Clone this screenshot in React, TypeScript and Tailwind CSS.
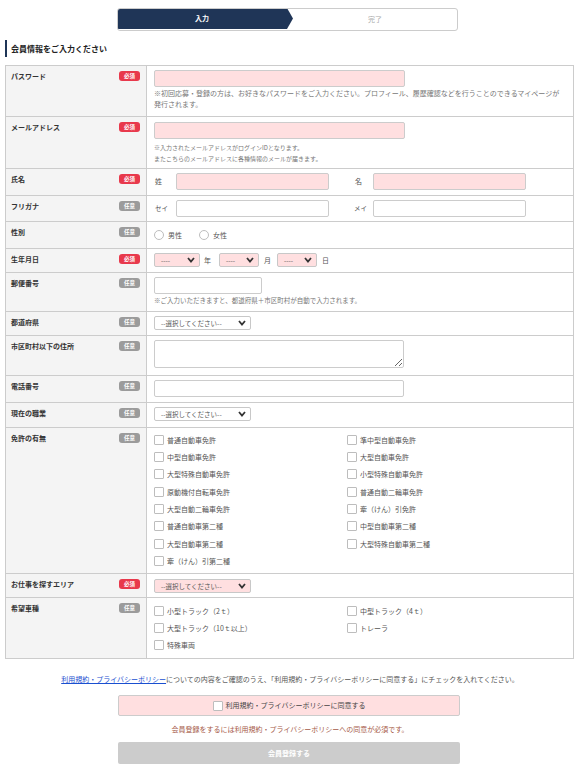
import React from "react";

const FONT = { fontFamily: '"Noto Sans CJK JP", "Noto Sans", sans-serif' };

function Badge({ req }: { req: boolean }) {
  return (
    <span
      className={
        req
          ? "w-[21px] h-[10px] rounded-[3px] bg-[#e8394c] text-white text-[5.5px] leading-[10px] text-center shrink-0 font-bold"
          : "w-[21px] h-[10px] rounded-[3px] bg-[#9b9b9b] text-white text-[5.5px] leading-[10px] text-center shrink-0 font-bold"
      }
    >
      {req ? "必須" : "任意"}
    </span>
  );
}

function Row({
  label,
  req,
  h,
  pt,
  last,
  children,
}: {
  label: string;
  req: boolean;
  h: string;
  pt: string;
  last?: boolean;
  children?: React.ReactNode;
}) {
  return (
    <div className={`flex ${h} ${last ? "" : "border-b border-[#cccccc]"}`}>
      <div className="w-[141px] shrink-0 bg-[#f4f4f4] border-r border-[#cccccc] flex justify-between items-start pl-[5px] pr-[6px] pt-[5px]">
        <span className="text-[7px] leading-[10px] font-bold text-[#333]">{label}</span>
        <Badge req={req} />
      </div>
      <div className={`flex-1 pl-[7px] ${pt}`}>{children}</div>
    </div>
  );
}

function Chevron() {
  return (
    <svg width="8" height="6" viewBox="0 0 8 6" className="shrink-0">
      <polyline points="1,1 4,4.5 7,1" fill="none" stroke="#333" strokeWidth="1.8" />
    </svg>
  );
}

function Select({ w, pink, text }: { w: string; pink?: boolean; text: string }) {
  return (
    <div
      className={`${w} h-[14px] border border-[#c8c8c8] rounded-[2px] flex items-center justify-between pl-[6px] pr-[4px] ${
        pink ? "bg-[#ffdfe0]" : "bg-white"
      }`}
    >
      <span className="text-[6.5px] leading-[10px] text-[#555] whitespace-nowrap">{text}</span>
      <Chevron />
    </div>
  );
}

function Box() {
  return <span className="w-[10px] h-[10px] border border-[#bdbdbd] bg-white rounded-[1px] shrink-0"></span>;
}

function Check({ label }: { label: string }) {
  return (
    <div className="flex items-center gap-[3px]">
      <Box />
      <span className="text-[7px] leading-[10px] text-[#555] whitespace-nowrap">{label}</span>
    </div>
  );
}

const licenses = [
  "普通自動車免許",
  "準中型自動車免許",
  "中型自動車免許",
  "大型自動車免許",
  "大型特殊自動車免許",
  "小型特殊自動車免許",
  "原動機付自転車免許",
  "普通自動二輪車免許",
  "大型自動二輪車免許",
  "牽（けん）引免許",
  "普通自動車第二種",
  "中型自動車第二種",
  "大型自動車第二種",
  "大型特殊自動車第二種",
  "牽（けん）引第二種",
];

const vehicles = ["小型トラック（2ｔ）", "中型トラック（4ｔ）", "大型トラック（10ｔ以上）", "トレーラ", "特殊車両"];

export default function App() {
  return (
    <div className="w-[580px] h-[776px] bg-white overflow-hidden" style={FONT}>
      {/* steps */}
      <div className="pt-[8px] pl-[117px]">
        <div className="w-[341px] h-[23px] flex border border-[#cccccc] rounded-[3px] overflow-hidden">
          <div className="w-[176px] h-full bg-[#1f3557] flex items-center justify-center pr-[6px] [clip-path:polygon(0_0,calc(100%-6px)_0,100%_50%,calc(100%-6px)_100%,0_100%)] -ml-px -mt-px h-[23px]">
            <span className="text-[7px] font-bold text-white">入力</span>
          </div>
          <div className="flex-1 flex items-center justify-center">
            <span className="text-[7px] text-[#aaaaaa]">完了</span>
          </div>
        </div>
      </div>

      {/* heading */}
      <div className="mt-[9px] ml-[5px] h-[17px] border-l-2 border-[#1f3557] pl-[4px] flex items-center">
        <span className="text-[8px] font-bold text-[#222]">会員情報をご入力ください</span>
      </div>

      {/* table */}
      <div className="mt-[8px] ml-[5px] w-[569px] border border-[#cccccc]">
        <Row label="パスワード" req h="h-[51px]" pt="pt-[4px]">
          <input className="block w-[251px] h-[17px] border border-[#cccccc] rounded-[2px] bg-[#ffdfe0]" />
          <p className="mt-[1px] text-[7px] leading-[11px] text-[#777] pr-[8px]">
            ※初回応募・登録の方は、お好きなパスワードをご入力ください。プロフィール、履歴確認などを行うことのできるマイページが発行されます。
          </p>
        </Row>
        <Row label="メールアドレス" req h="h-[52px]" pt="pt-[5px]">
          <input className="block w-[251px] h-[17px] border border-[#cccccc] rounded-[2px] bg-[#ffdfe0]" />
          <p className="mt-[3px] text-[6px] leading-[11px] text-[#777]">※入力されたメールアドレスがログインIDとなります。</p>
          <p className="text-[6px] leading-[11px] text-[#777]">またこちらのメールアドレスに各種情報のメールが届きます。</p>
        </Row>
        <Row label="氏名" req h="h-[27px]" pt="pt-[4px]">
          <div className="flex items-center">
            <span className="w-[22px] pl-[1px] text-[7px] text-[#555]">姓</span>
            <input className="block w-[153px] h-[17px] border border-[#cccccc] rounded-[2px] bg-[#ffdfe0]" />
            <span className="ml-[26px] w-[18px] text-[7px] text-[#555]">名</span>
            <input className="block w-[153px] h-[17px] border border-[#cccccc] rounded-[2px] bg-[#ffdfe0]" />
          </div>
        </Row>
        <Row label="フリガナ" req={false} h="h-[26px]" pt="pt-[4px]">
          <div className="flex items-center">
            <span className="w-[22px] pl-[1px] text-[6.5px] text-[#555]">セイ</span>
            <input className="block w-[153px] h-[17px] border border-[#cccccc] rounded-[2px] bg-white" />
            <span className="ml-[25px] w-[19px] text-[6.5px] text-[#555]">メイ</span>
            <input className="block w-[153px] h-[17px] border border-[#cccccc] rounded-[2px] bg-white" />
          </div>
        </Row>
        <Row label="性別" req={false} h="h-[27px]" pt="pt-[8px]">
          <div className="flex items-center">
            <span className="w-[10px] h-[10px] rounded-full border border-[#bdbdbd] bg-white"></span>
            <span className="ml-[4px] text-[7px] leading-[10px] text-[#555]">男性</span>
            <span className="ml-[17px] w-[10px] h-[10px] rounded-full border border-[#bdbdbd] bg-white"></span>
            <span className="ml-[4px] text-[7px] leading-[10px] text-[#555]">女性</span>
          </div>
        </Row>
        <Row label="生年月日" req h="h-[24px]" pt="pt-[4px]">
          <div className="flex items-center">
            <Select w="w-[46px]" pink text="----" />
            <span className="ml-[4px] w-[15px] text-[7px] text-[#555]">年</span>
            <Select w="w-[40px]" pink text="----" />
            <span className="ml-[5px] w-[13px] text-[7px] text-[#555]">月</span>
            <Select w="w-[40px]" pink text="----" />
            <span className="ml-[5px] text-[7px] text-[#555]">日</span>
          </div>
        </Row>
        <Row label="郵便番号" req={false} h="h-[39px]" pt="pt-[4px]">
          <input className="block w-[108px] h-[17px] border border-[#cccccc] rounded-[2px] bg-white" />
          <p className="mt-[1px] text-[6.5px] leading-[11px] text-[#777]">※ご入力いただきますと、都道府県＋市区町村が自動で入力されます。</p>
        </Row>
        <Row label="都道府県" req={false} h="h-[24px]" pt="pt-[4px]">
          <Select w="w-[97px]" text="--選択してください--" />
        </Row>
        <Row label="市区町村以下の住所" req={false} h="h-[40px]" pt="pt-[4px]">
          <textarea className="block w-[250px] h-[28px] border border-[#cccccc] rounded-[2px] bg-white"></textarea>
        </Row>
        <Row label="電話番号" req={false} h="h-[27px]" pt="pt-[4px]">
          <input className="block w-[250px] h-[17px] border border-[#cccccc] rounded-[2px] bg-white" />
        </Row>
        <Row label="現在の職業" req={false} h="h-[25px]" pt="pt-[4px]">
          <Select w="w-[97px]" text="--選択してください--" />
        </Row>
        <Row label="免許の有無" req={false} h="h-[146px]" pt="pt-[3px]">
          <div className="grid grid-cols-[193px_1fr] auto-rows-[17.35px] items-center">
            {licenses.map((l) => (
              <Check key={l} label={l} />
            ))}
          </div>
        </Row>
        <Row label="お仕事を探すエリア" req h="h-[24px]" pt="pt-[5px]">
          <Select w="w-[97px]" pink text="--選択してください--" />
        </Row>
        <Row label="希望車種" req={false} h="h-[60px]" pt="pt-[4px]" last>
          <div className="grid grid-cols-[193px_1fr] auto-rows-[17.35px] items-center">
            {vehicles.map((l) => (
              <Check key={l} label={l} />
            ))}
          </div>
        </Row>
      </div>

      {/* bottom */}
      <div className="mt-[15px] flex justify-center">
        <p className="text-[7px] leading-[11px] text-[#555] whitespace-nowrap">
          <span className="text-[#1a4fd0] underline">利用規約・プライバシーポリシー</span>
          についての内容をご確認のうえ、「利用規約・プライバシーポリシーに同意する」にチェックを入れてください。
        </p>
      </div>
      <div className="mt-[10px] ml-[118px] w-[342px] h-[21px] bg-[#ffdfe0] border border-[#cccccc] rounded-[2px] flex items-center justify-center gap-[3px]">
        <Box />
        <span className="text-[7px] text-[#444]">利用規約・プライバシーポリシーに同意する</span>
      </div>
      <div className="mt-[8px] flex justify-center">
        <p className="text-[7px] leading-[11px] text-[#a65a48]">会員登録をするには利用規約・プライバシーポリシーへの同意が必須です。</p>
      </div>
      <div className="mt-[7px] ml-[118px] w-[342px] h-[22px] bg-[#cccccc] rounded-[2px] flex items-center justify-center">
        <span className="text-[7px] font-bold text-white">会員登録する</span>
      </div>
    </div>
  );
}
